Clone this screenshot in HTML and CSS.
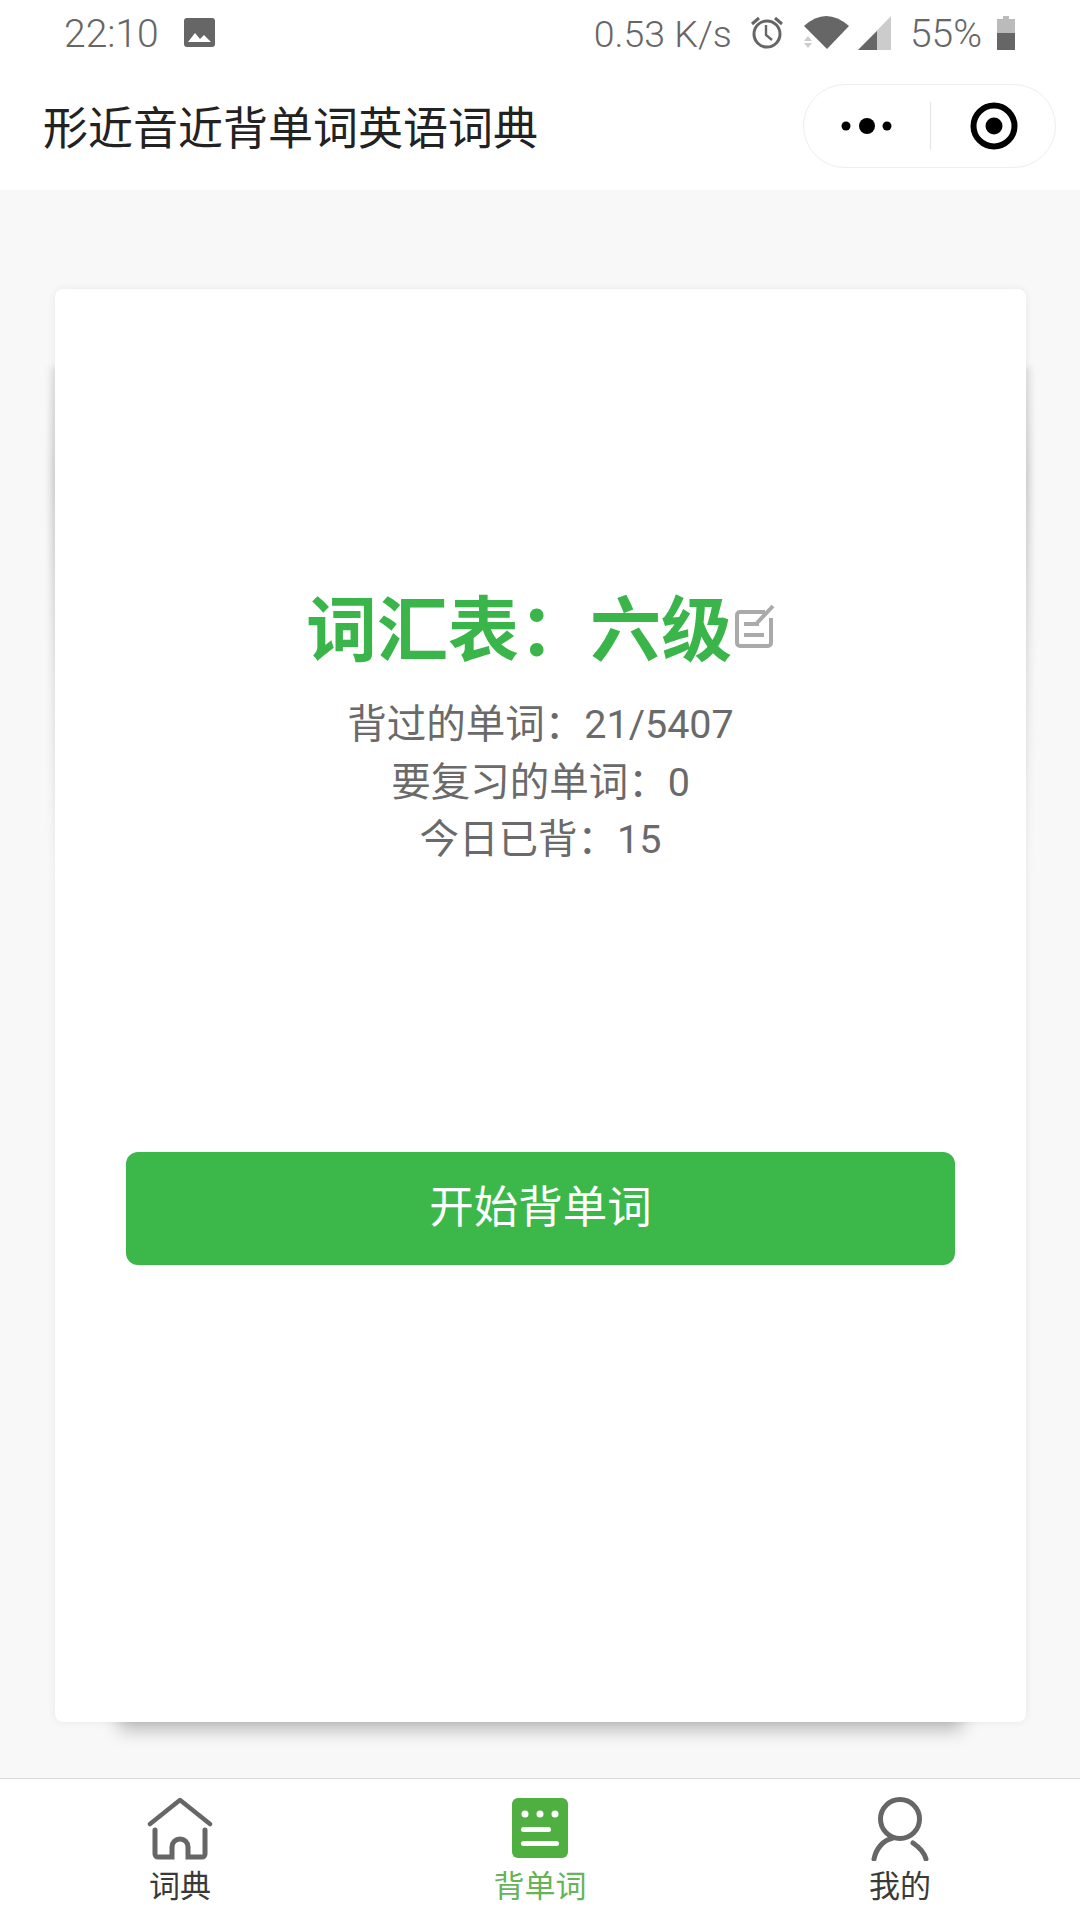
FILE: index.html
```html
<!DOCTYPE html>
<html lang="zh">
<head>
<title>形近音近背单词英语词典</title>
<meta charset="utf-8">
<link rel="stylesheet" href="styles.css">
</head>
<body>

<div class="statusbar">
	<span class="time">22:10</span>
	<svg class="ic-image" width="31" height="29" viewBox="0 0 31 29"><rect width="31" height="29" rx="3" fill="#666"/><path d="M4 24l7-9 5 6 4-4 7 7z" fill="#fff"/></svg>
	<span class="spacer"></span>
	<span class="speed">0.53 K/s</span>
	<svg class="ic-alarm" width="32" height="33" viewBox="0 0 32 33"><circle cx="16" cy="18" r="13" fill="none" stroke="#666" stroke-width="3"/><path d="M15 9v10l6 5" fill="none" stroke="#666" stroke-width="2.4"/><path d="M1 8l7-6M31 8l-7-6" stroke="#666" stroke-width="3"/></svg>
	<svg class="ic-wifi" width="47" height="34" viewBox="0 0 47 34"><path d="M1 10Q23-10 46 10L24 33z" fill="#666"/><path d="M1 25l4-5 4 5zM1 27h8l-4 5z" fill="#ccc"/></svg>
	<svg class="ic-signal" width="33" height="34" viewBox="0 0 33 34"><path d="M33 0v34H0z" fill="#ccc"/><path d="M19 15v19H0z" fill="#666"/></svg>
	<span class="battery-pct">55%</span>
	<svg class="ic-battery" width="18" height="34" viewBox="0 0 18 34"><path d="M6 0h6v3h6v15H0V3h6z" fill="#bbb"/><rect y="17" width="18" height="17" fill="#666"/></svg>
</div>

<div class="navbar">
	<div class="nav-title">形近音近背单词英语词典</div>
	<div class="capsule">
		<svg width="60" height="20" viewBox="0 0 60 20"><circle cx="9" cy="10" r="4.5"/><circle cx="30" cy="10" r="8"/><circle cx="50" cy="10" r="4.5"/></svg>
		<span class="capsule-line"></span>
		<svg width="48" height="48" viewBox="0 0 48 48"><circle cx="24" cy="24" r="20.5" fill="none" stroke="#000" stroke-width="6"/><circle cx="24" cy="24" r="8.5"/></svg>
	</div>
</div>

<div class="main">
	<div class="card">
		<div class="wordbook">
			<span>词汇表：六级</span>
			<svg width="40" height="44" viewBox="0 0 40 44"><path d="M30 8H5a3 3 0 0 0-3 3v28a3 3 0 0 0 3 3h28a3 3 0 0 0 3-3V14" fill="none" stroke="#aaa" stroke-width="4"/><path d="M9 20h15M9 31h20" stroke="#aaa" stroke-width="4"/><path d="M21 20L38 2" stroke="#aaa" stroke-width="4"/></svg>
		</div>
		<div class="stats">
			<div>背过的单词：21/5407</div>
			<div>要复习的单词：0</div>
			<div>今日已背：15</div>
		</div>
		<div class="start-btn">开始背单词</div>
	</div>
</div>

<div class="tabbar">
	<div class="tab">
		<svg width="66" height="64" viewBox="0 0 66 64"><path d="M3 27L33 3l30 24" fill="none" stroke="#666" stroke-width="4.5" stroke-linecap="round" stroke-linejoin="round"/><path d="M8 33v24a3 3 0 0 0 3 3h14V50a8 8 0 0 1 16 0v10h14a3 3 0 0 0 3-3V33" fill="none" stroke="#666" stroke-width="5" stroke-linecap="round"/></svg>
		<span>词典</span>
	</div>
	<div class="tab tab-on">
		<svg width="56" height="64" viewBox="0 0 56 64"><rect width="56" height="60" y="1" rx="6" fill="#4fb041"/><circle cx="13" cy="17" r="3.5" fill="#fff"/><circle cx="28" cy="17" r="3.5" fill="#fff"/><circle cx="43" cy="17" r="3.5" fill="#fff"/><rect x="9" y="30" width="30" height="5" rx="2.5" fill="#fff"/><rect x="9" y="44" width="38" height="5" rx="2.5" fill="#fff"/></svg>
		<span>背单词</span>
	</div>
	<div class="tab">
		<svg width="58" height="64" viewBox="0 0 58 64"><circle cx="29" cy="22" r="19.5" fill="none" stroke="#666" stroke-width="5"/><path d="M3 62C5 52 12 43 22 41M42 46C48 50 53 55 55 62" fill="none" stroke="#666" stroke-width="5" stroke-linecap="round"/></svg>
		<span>我的</span>
	</div>
</div>

</body>
</html>
```

FILE: styles.css
```css
html, body {
	margin: 0;
	padding: 0;
}

body {
	width: 1080px;
	height: 1920px;
	display: flex;
	flex-direction: column;
	background: #f8f8f8;
	font-family: "Noto Sans CJK SC", Roboto, sans-serif;
	overflow: hidden;
}

svg { display: block; flex: none; }

/* phone status bar */
.statusbar {
	height: 65px;
	background: #fff;
	display: flex;
	align-items: center;
	padding: 0 65px 0 64px;
	color: #666;
	font-family: Roboto, sans-serif;
	font-weight: 300;
	font-size: 39px;
	box-sizing: border-box;
}

.statusbar span { margin-top: 2px; }

.ic-image { margin-left: 25px; }
.spacer { flex: 1; }
.speed { font-size: 37.5px; }
.ic-alarm { margin-left: 19px; }
.ic-wifi { margin-left: 20px; }
.ic-signal { margin-left: 8px; }
.statusbar .battery-pct { margin-left: 19px; margin-right: 2px; }
.ic-battery { margin-left: 13px; }

/* mini program nav */
.navbar {
	height: 125px;
	background: #fff;
	display: flex;
	align-items: center;
	justify-content: space-between;
	padding: 0 24px 0 43px;
}

.nav-title {
	font-size: 45px;
	color: #222;
	margin-top: -4px;
}

.capsule {
	width: 253px;
	height: 84px;
	box-sizing: border-box;
	border: 1px solid #eee;
	border-radius: 42px;
	display: flex;
	align-items: center;
	padding-left: 33px;
	margin-top: -4px;
}

.capsule-line {
	width: 1px;
	height: 48px;
	background: #e5e5e5;
	margin: 0 39px 0 33px;
}

/* word card */
.main {
	flex: 1;
	padding: 99px 54px 0 55px;
	position: relative;
	isolation: isolate;
}

.card {
	height: 1433px;
	background: #fff;
	border-radius: 8px;
	box-shadow: 0 0 8px rgba(0, 0, 0, 0.07);
	position: relative;
	box-sizing: border-box;
	padding-top: 285px;
	display: flex;
	flex-direction: column;
	align-items: center;
}

/* soft shadows peeking out at the sides and under the card */
.card::before {
	content: "";
	position: absolute;
	z-index: -1;
	left: -5px;
	right: -5px;
	top: 78px;
	height: 500px;
	background: linear-gradient(to bottom, #e4e4e4, #d6d6d6 22%, #e8e8e8 55%, #f8f8f8);
	filter: blur(3px);
}

.card::after {
	content: "";
	position: absolute;
	z-index: -1;
	left: 64px;
	right: 64px;
	bottom: 0;
	height: 30px;
	box-shadow: 0 8px 18px rgba(0, 0, 0, 0.25);
}

.wordbook {
	display: flex;
	align-items: center;
	height: 100px;
	font-size: 71px;
	font-weight: 700;
	color: #39b54a;
}

.wordbook svg { margin-left: 3px; margin-top: 4px; }

.stats {
	margin-top: 22px;
	font-size: 39.5px;
	line-height: 57.5px;
	color: #6a6a6a;
	text-align: center;
	font-family: Roboto, "Noto Sans CJK SC", sans-serif;
}

.start-btn {
	width: 829px;
	height: 113px;
	line-height: 104px;
	margin-top: 283px;
	background: #3cb84a;
	border-radius: 12px;
	color: #fff;
	font-size: 44.5px;
	text-align: center;
}

/* bottom tabs */
.tabbar {
	height: 142px;
	background: #fff;
	border-top: 1px solid #d9d9d9;
	box-sizing: border-box;
	display: grid;
	grid-template-columns: repeat(3, 1fr);
}

.tab {
	display: flex;
	flex-direction: column;
	align-items: center;
	padding-top: 18px;
	font-size: 31px;
	line-height: 46px;
	color: #3a3a3a;
}

.tab-on { color: #66b35a; }
```
